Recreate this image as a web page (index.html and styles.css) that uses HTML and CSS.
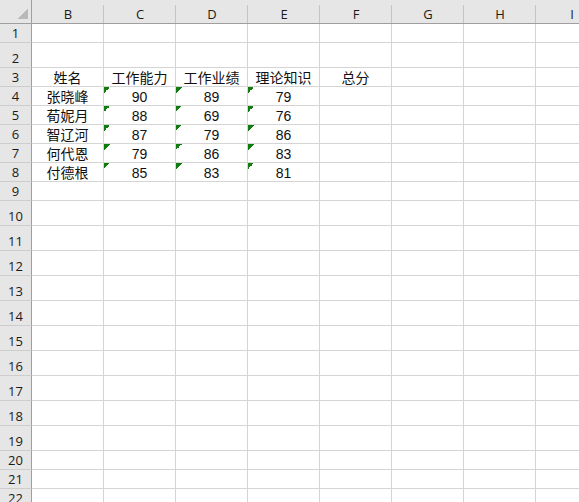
FILE: index.html
```html
<!DOCTYPE html>
<html lang="zh-CN">
<head>
<meta charset="utf-8">
<title>Sheet1</title>
<link rel="stylesheet" href="styles.css">
</head>
<body>
<div class="frame">
<div class="sheet">
  <div class="corner"></div>
  <div class="colh">B</div><div class="colh">C</div><div class="colh">D</div><div class="colh">E</div><div class="colh">F</div><div class="colh">G</div><div class="colh">H</div><div class="colh last">I</div>

  <div class="rowh">1</div><div class="c"></div><div class="c"></div><div class="c"></div><div class="c"></div><div class="c"></div><div class="c"></div><div class="c"></div><div class="c"></div>
  <div class="rowh">2</div><div class="c"></div><div class="c"></div><div class="c"></div><div class="c"></div><div class="c"></div><div class="c"></div><div class="c"></div><div class="c"></div>
  <div class="rowh">3</div><div class="c">姓名</div><div class="c">工作能力</div><div class="c">工作业绩</div><div class="c">理论知识</div><div class="c">总分</div><div class="c"></div><div class="c"></div><div class="c"></div>
  <div class="rowh">4</div><div class="c">张晓峰</div><div class="c t">90</div><div class="c t">89</div><div class="c t">79</div><div class="c"></div><div class="c"></div><div class="c"></div><div class="c"></div>
  <div class="rowh">5</div><div class="c">荀妮月</div><div class="c t">88</div><div class="c t">69</div><div class="c t">76</div><div class="c"></div><div class="c"></div><div class="c"></div><div class="c"></div>
  <div class="rowh">6</div><div class="c">智辽河</div><div class="c t">87</div><div class="c t">79</div><div class="c t">86</div><div class="c"></div><div class="c"></div><div class="c"></div><div class="c"></div>
  <div class="rowh">7</div><div class="c">何代恩</div><div class="c t">79</div><div class="c t">86</div><div class="c t">83</div><div class="c"></div><div class="c"></div><div class="c"></div><div class="c"></div>
  <div class="rowh">8</div><div class="c">付德根</div><div class="c t">85</div><div class="c t">83</div><div class="c t">81</div><div class="c"></div><div class="c"></div><div class="c"></div><div class="c"></div>
  <div class="rowh">9</div><div class="c"></div><div class="c"></div><div class="c"></div><div class="c"></div><div class="c"></div><div class="c"></div><div class="c"></div><div class="c"></div>
  <div class="rowh">10</div><div class="c"></div><div class="c"></div><div class="c"></div><div class="c"></div><div class="c"></div><div class="c"></div><div class="c"></div><div class="c"></div>
  <div class="rowh">11</div><div class="c"></div><div class="c"></div><div class="c"></div><div class="c"></div><div class="c"></div><div class="c"></div><div class="c"></div><div class="c"></div>
  <div class="rowh">12</div><div class="c"></div><div class="c"></div><div class="c"></div><div class="c"></div><div class="c"></div><div class="c"></div><div class="c"></div><div class="c"></div>
  <div class="rowh">13</div><div class="c"></div><div class="c"></div><div class="c"></div><div class="c"></div><div class="c"></div><div class="c"></div><div class="c"></div><div class="c"></div>
  <div class="rowh">14</div><div class="c"></div><div class="c"></div><div class="c"></div><div class="c"></div><div class="c"></div><div class="c"></div><div class="c"></div><div class="c"></div>
  <div class="rowh">15</div><div class="c"></div><div class="c"></div><div class="c"></div><div class="c"></div><div class="c"></div><div class="c"></div><div class="c"></div><div class="c"></div>
  <div class="rowh">16</div><div class="c"></div><div class="c"></div><div class="c"></div><div class="c"></div><div class="c"></div><div class="c"></div><div class="c"></div><div class="c"></div>
  <div class="rowh">17</div><div class="c"></div><div class="c"></div><div class="c"></div><div class="c"></div><div class="c"></div><div class="c"></div><div class="c"></div><div class="c"></div>
  <div class="rowh">18</div><div class="c"></div><div class="c"></div><div class="c"></div><div class="c"></div><div class="c"></div><div class="c"></div><div class="c"></div><div class="c"></div>
  <div class="rowh">19</div><div class="c"></div><div class="c"></div><div class="c"></div><div class="c"></div><div class="c"></div><div class="c"></div><div class="c"></div><div class="c"></div>
  <div class="rowh">20</div><div class="c"></div><div class="c"></div><div class="c"></div><div class="c"></div><div class="c"></div><div class="c"></div><div class="c"></div><div class="c"></div>
  <div class="rowh">21</div><div class="c"></div><div class="c"></div><div class="c"></div><div class="c"></div><div class="c"></div><div class="c"></div><div class="c"></div><div class="c"></div>
  <div class="rowh">22</div><div class="c"></div><div class="c"></div><div class="c"></div><div class="c"></div><div class="c"></div><div class="c"></div><div class="c"></div><div class="c"></div>
</div>
</div>
</body>
</html>
```
FILE: styles.css
```css
html, body {
  margin: 0;
  padding: 0;
  background: #ffffff;
  overflow: hidden;
}

.frame {
  width: 579px;
  height: 502px;
  overflow: hidden;
}

.sheet {
  display: grid;
  grid-template-columns: 32px repeat(8, 72px);
  grid-template-rows:
    24px 19px 25px 19px
    19px 19px 19px 19px 19px 19px
    25px 25px 25px 25px 25px 25px 25px 25px 25px 25px
    19px 19px 19px;
  width: 608px;
  font-family: "Liberation Sans", "Noto Sans CJK SC", sans-serif;
  font-size: 14px;
  color: #000;
}

.sheet > div {
  box-sizing: border-box;
  display: flex;
  align-items: flex-end;
  justify-content: center;
  white-space: nowrap;
  overflow: hidden;
}

.corner {
  background:
    linear-gradient(to bottom right, transparent 50%, #b9b9b9 50%) right 3px bottom 4px / 10px 10px no-repeat,
    #e6e6e6;
  border-right: 1px solid #9f9f9f;
  border-bottom: 1px solid #9f9f9f;
}

.colh {
  background:
    linear-gradient(#c4c4c4, #c4c4c4) right bottom / 1px 18px no-repeat,
    #e6e6e6;
  border-bottom: 1px solid #9f9f9f;
  font-family: "Open Sans", "Noto Sans", sans-serif;
  font-size: 13px;
  line-height: 16px;
  padding-bottom: 1px;
  color: #1a1a1a;
}

.rowh {
  background: #e6e6e6;
  border-right: 1px solid #9f9f9f;
  border-bottom: 1px solid #cdcdcd;
  font-family: "Open Sans", "Noto Sans", sans-serif;
  font-size: 13px;
  line-height: 16px;
  padding-bottom: 1px;
  color: #1a1a1a;
}

.c {
  position: relative;
  border-right: 1px solid #d4d4d4;
  border-bottom: 1px solid #d4d4d4;
  line-height: 16px;
  color: #111;
}

.t::before {
  content: "";
  position: absolute;
  top: 0;
  left: 0;
  width: 6px;
  height: 6px;
  background: linear-gradient(135deg, #107c10 50%, transparent 50%);
}
```
